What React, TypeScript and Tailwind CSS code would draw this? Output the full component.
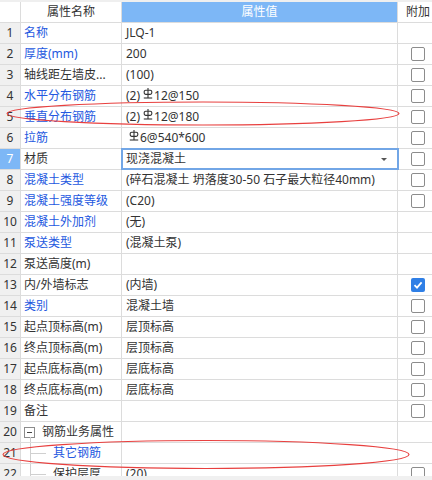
import React from 'react';

type Row = {
  name: React.ReactNode;
  value?: React.ReactNode;
  blue?: boolean;
  check?: 'off' | 'on';
  active?: boolean;
  tree?: 'group' | 'leaf';
};

const line = 'border-[#dcdcdc]';

function Steel() {
  return (
    <svg width="10" height="11" viewBox="0 0 10 11" className="inline-block relative -top-[3px] ml-[3px] mr-[1px]">
      <line x1="5" y1="0" x2="5" y2="10" stroke="#333" strokeWidth="1.1" />
      <rect x="1.2" y="2.2" width="7.6" height="4.2" rx="1.6" fill="none" stroke="#333" strokeWidth="1.1" />
      <line x1="0.8" y1="10" x2="9.2" y2="10" stroke="#333" strokeWidth="1.1" />
    </svg>
  );
}

function CheckBox({ on }: { on?: boolean }) {
  if (on) {
    return (
      <div className="w-[14px] h-[14px] rounded-[2px] bg-[#2f7fe6] flex items-center justify-center">
        <svg width="10" height="10" viewBox="0 0 10 10">
          <path d="M1.5 5.2 L4 7.6 L8.6 2.4" fill="none" stroke="#fff" strokeWidth="1.8" />
        </svg>
      </div>
    );
  }
  return <div className="w-[14px] h-[14px] rounded-[2px] border border-[#8c8c8c] bg-white" />;
}

const rows: Row[] = [
  { name: '名称', value: 'JLQ-1', blue: true },
  { name: '厚度(mm)', value: '200', blue: true, check: 'off' },
  { name: '轴线距左墙皮...', value: '(100)', check: 'off' },
  { name: '水平分布钢筋', value: <>(2)<Steel />12@150</>, blue: true, check: 'off' },
  { name: '垂直分布钢筋', value: <>(2)<Steel />12@180</>, blue: true, check: 'off' },
  { name: '拉筋', value: <><Steel />6@540*600</>, blue: true, check: 'off' },
  { name: '材质', value: '现浇混凝土', check: 'off', active: true },
  { name: '混凝土类型', value: '(碎石混凝土 坍落度30-50 石子最大粒径40mm)', blue: true, check: 'off' },
  { name: '混凝土强度等级', value: '(C20)', blue: true, check: 'off' },
  { name: '混凝土外加剂', value: '(无)', blue: true },
  { name: '泵送类型', value: '(混凝土泵)', blue: true },
  { name: '泵送高度(m)' },
  { name: '内/外墙标志', value: '(内墙)', check: 'on' },
  { name: '类别', value: '混凝土墙', blue: true, check: 'off' },
  { name: '起点顶标高(m)', value: '层顶标高', check: 'off' },
  { name: '终点顶标高(m)', value: '层顶标高', check: 'off' },
  { name: '起点底标高(m)', value: '层底标高', check: 'off' },
  { name: '终点底标高(m)', value: '层底标高', check: 'off' },
  { name: '备注', check: 'off' },
  { name: '钢筋业务属性', tree: 'group' },
  { name: '其它钢筋', blue: true, tree: 'leaf' },
  { name: '保护层厚', value: '(20)', tree: 'leaf', check: 'off' },
];

function NameCell({ row }: { row: Row }) {
  const color = row.blue ? 'text-[#2458e0]' : 'text-[#333]';
  if (row.tree === 'group') {
    return (
      <div className="relative flex items-center h-full pl-[3px]">
        <div className="w-[11px] h-[11px] border border-[#8c8c8c] flex items-center justify-center">
          <div className="w-[5px] h-px bg-[#444]" />
        </div>
        <div className="absolute left-[9px] top-[15px] bottom-0 w-px bg-[#d0d0d0]" />
        <span className={`ml-[7px] ${color}`}>{row.name}</span>
      </div>
    );
  }
  if (row.tree === 'leaf') {
    return (
      <div className="flex items-center h-full">
        <div className="ml-[9px] w-px self-stretch bg-[#d0d0d0]" />
        <div className="w-[15px] h-px bg-[#d0d0d0]" />
        <span className={`ml-[7px] ${color}`}>{row.name}</span>
      </div>
    );
  }
  return <div className={`flex items-center h-full pl-[3px] whitespace-nowrap ${color}`}>{row.name}</div>;
}

export default function App() {
  return (
    <div
      className="relative w-[432px] h-[480px] overflow-hidden bg-white text-[12px] text-[#333]"
      style={{ fontFamily: '"Noto Sans", "Noto Sans CJK SC", sans-serif' }}
    >
      <div className="h-[476px] overflow-hidden">
        <div className="w-[438px]">
          <div className="h-[2px] bg-[#efefef]" />
          <div className={`flex h-[21px] border-b ${line}`}>
            <div className={`w-[21px] shrink-0 border-r ${line} bg-white`} />
            <div className={`w-[101px] shrink-0 border-r ${line} flex items-center justify-center`}>属性名称</div>
            <div className={`w-[276px] shrink-0 border-r ${line} bg-[#7db7f6] text-white flex items-center justify-center`}>属性值</div>
            <div className="w-[40px] shrink-0 flex items-center justify-center">附加</div>
          </div>
          {rows.map((row, i) => (
            <div key={i} className={`flex h-[21px] border-b ${line}`}>
              <div
                className={`w-[21px] shrink-0 border-r ${line} flex items-center justify-center ${
                  row.active ? 'bg-[#7db7f6] text-white' : 'bg-[#f0f0f0]'
                }`}
              >
                {i + 1}
              </div>
              <div className={`w-[101px] shrink-0 border-r ${line} overflow-hidden`}>
                <NameCell row={row} />
              </div>
              <div
                className={`w-[276px] shrink-0 border-r ${line} flex items-center pl-[4px] whitespace-nowrap ${
                  row.active ? 'outline-2 outline-[#72a6e6] -outline-offset-1 pr-[10px]' : ''
                }`}
              >
                <span className="flex-1">{row.value}</span>
                {row.active && (
                  <svg width="6" height="3" viewBox="0 0 6 3">
                    <polygon points="0,0 6,0 3,3" fill="#555" />
                  </svg>
                )}
              </div>
              <div className="w-[40px] shrink-0 flex items-center justify-center">
                {row.check && <CheckBox on={row.check === 'on'} />}
              </div>
            </div>
          ))}
        </div>
      </div>
      <div className="h-[4px] bg-[#f0f0f0]" />
      <svg className="absolute inset-0 pointer-events-none" width="432" height="480">
        <ellipse cx="203" cy="113.5" rx="196" ry="11.5" fill="none" stroke="#e8403f" strokeWidth="1.2" />
        <ellipse cx="206" cy="454.5" rx="203" ry="14" fill="none" stroke="#e8403f" strokeWidth="1.2" />
      </svg>
    </div>
  );
}
